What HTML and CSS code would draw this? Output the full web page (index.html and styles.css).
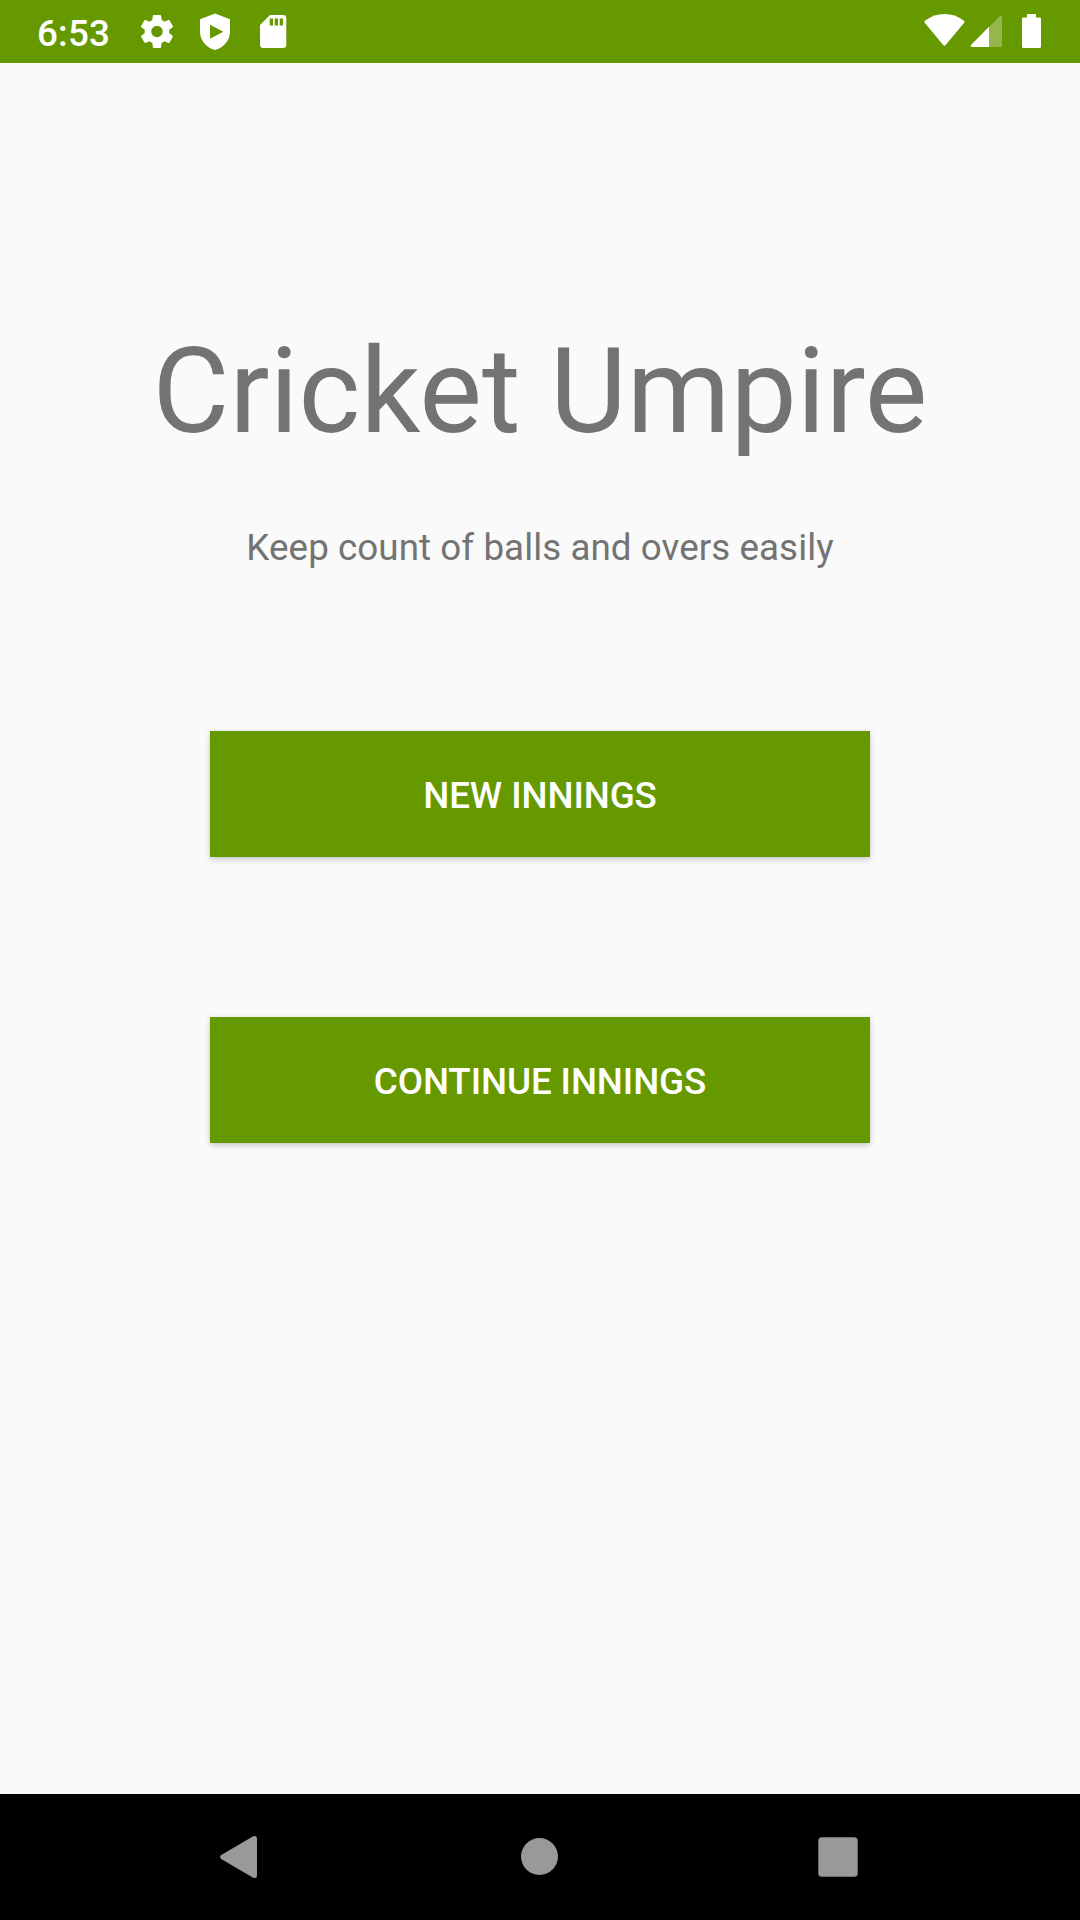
FILE: index.html
```html
<!DOCTYPE html>
<html lang="en">
<head>
<meta charset="utf-8">
<title>Cricket Umpire</title>
<link rel="stylesheet" href="styles.css">
</head>
<body>
<div class="screen">
  <header class="status-bar">
    <span class="clock">6:53</span>
    <svg class="notifications" width="150" height="63" viewBox="138 0 150 63" fill="#fff">
      <path transform="translate(137.3 11.8) scale(1.64)" d="M19.43 12.98c.04-.32.07-.64.07-.98s-.03-.66-.07-.98l2.11-1.65c.19-.15.24-.42.12-.64l-2-3.46c-.12-.22-.39-.3-.61-.22l-2.49 1c-.52-.4-1.08-.73-1.69-.98l-.38-2.65C14.46 2.18 14.25 2 14 2h-4c-.25 0-.46.18-.49.42l-.38 2.65c-.61.25-1.17.59-1.69.98l-2.49-1c-.23-.09-.49 0-.61.22l-2 3.46c-.13.22-.07.49.12.64l2.11 1.65c-.04.32-.07.65-.07.98s.03.66.07.98l-2.11 1.65c-.19.15-.24.42-.12.64l2 3.46c.12.22.39.3.61.22l2.49-1c.52.4 1.08.73 1.69.98l.38 2.65c.03.24.24.42.49.42h4c.25 0 .46-.18.49-.42l.38-2.65c.61-.25 1.17-.59 1.69-.98l2.49 1c.23.09.49 0 .61-.22l2-3.46c.12-.22.07-.49-.12-.64zM12 15.5a3.5 3.5 0 1 1 0-7 3.5 3.5 0 0 1 0 7z"/>
      <path fill-rule="evenodd" d="M215 13.6L200 19.200V32C200 40.500 206.500 47.800 215 50C223.500 47.800 230 40.500 230 32V19.200ZM210 24.700V38.700L223.300 31.700Z"/>
      <path fill-rule="evenodd" d="M270 15H283A3.300 3.300 0 0 1 286.300 18.300V44.700A3.300 3.300 0 0 1 283 48H263.300A3.300 3.300 0 0 1 260 44.700V25ZM269.700 18.400V25.600H273V18.400ZM274.700 18.400V25.600H278V18.400ZM279.700 18.400V25.600H283V18.400Z"/>
    </svg>
    <svg class="system-icons" width="120" height="63" viewBox="922 0 120 63" fill="#fff">
      <path d="M924.700 22.800Q923.900 21.500 925.200 20.500C936.500 11.900 952.500 11.900 963.700 20.500Q965 21.500 964.200 22.800L945.600 45.100Q944.400 46.400 943.200 45.100Z"/>
      <path fill-opacity=".3" d="M989 27L999.600 16.300Q1002 14.800 1002 17.300V45.700Q1002 47 1000.700 47H989Z"/>
      <path d="M989 26.800V47H972.200Q970 46.600 971 44.900Z"/>
      <path d="M1027 14H1036V17.600H1039.600Q1041 17.600 1041 19V46.500Q1041 48 1039.600 48H1023.400Q1022 48 1022 46.500V19Q1022 17.600 1023.400 17.600H1027Z"/>
    </svg>
  </header>
  <main class="content">
    <h1 class="title">Cricket Umpire</h1>
    <p class="subtitle">Keep count of balls and overs easily</p>
    <div class="actions">
      <button class="action">NEW INNINGS</button>
      <button class="action">CONTINUE INNINGS</button>
    </div>
  </main>
  <nav class="nav-bar">
    <svg width="38" height="44" viewBox="0 0 38 44" fill="#999"><path d="M1.200 20L33.200 1.300Q37 0 37 3.500V40.500Q37 44 33.200 42.700L1.200 24Q-1 22 1.200 20Z"/></svg>
    <svg width="40" height="38" viewBox="0 0 40 38" fill="#999"><circle cx="21.500" cy="18.500" r="18.500"/></svg>
    <svg width="40" height="40" viewBox="0 0 40 40" fill="#999"><rect x=".3" y=".3" width="39.400" height="39.400" rx="3.500"/></svg>
  </nav>
</div>
</body>
</html>
```
FILE: styles.css
```css
body {
  margin: 0;
  background: #fafafa;
  font-family: Roboto, sans-serif;
}

.screen {
  display: flex;
  flex-direction: column;
  width: 1080px;
  height: 1920px;
  overflow: hidden;
}

.status-bar {
  display: flex;
  box-sizing: border-box;
  height: 63px;
  padding: 0 38px 0 37px;
  background: #690;
  color: #fff;
}

.clock {
  width: 101px;
  font-size: 36.75px;
  font-weight: 500;
  letter-spacing: .2px;
  line-height: 68px;
}

.system-icons {
  margin-left: auto;
}

.content {
  display: flex;
  flex: 1;
  flex-direction: column;
  align-items: center;
}

.title {
  margin: 259px 0 0;
  color: #737373;
  font-size: 118.125px;
  font-weight: 400;
  letter-spacing: .1px;
  line-height: 140px;
  white-space: nowrap;
}

.subtitle {
  margin: 64px 0 0;
  color: #737373;
  font-size: 36.75px;
  letter-spacing: .07px;
  line-height: 44px;
  white-space: nowrap;
}

.actions {
  display: flex;
  flex-direction: column;
  gap: 160px;
  margin-top: 161px;
}

.action {
  width: 660px;
  height: 126px;
  padding: 2px 0 0;
  border: 0;
  background: #690;
  box-shadow: 0 3px 6px rgba(0, 0, 0, .16), 0 0 4px rgba(0, 0, 0, .08);
  color: #fff;
  font: 500 36.75px Roboto, sans-serif;
  letter-spacing: -.1px;
}

.nav-bar {
  display: flex;
  align-items: center;
  justify-content: space-between;
  box-sizing: border-box;
  height: 126px;
  padding: 0 222px 0 220px;
  background: #000;
}
```
